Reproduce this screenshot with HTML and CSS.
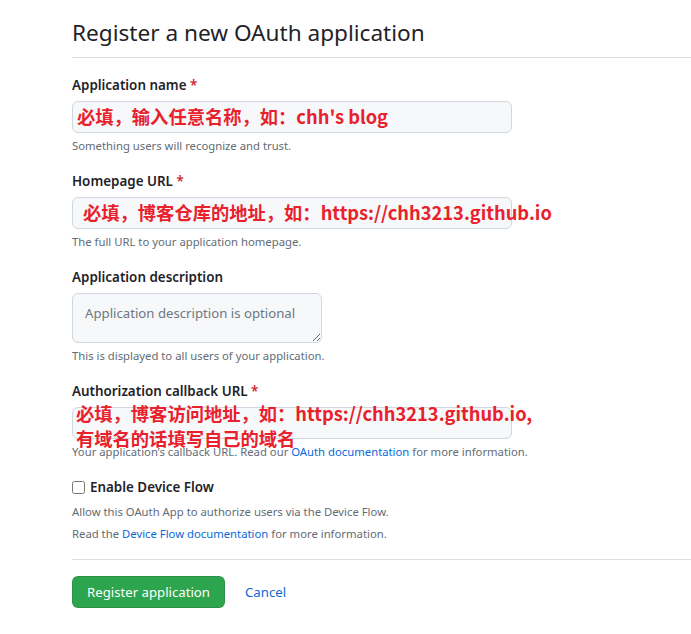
FILE: index.html
```html
<!DOCTYPE html>
<html lang="en">
<head>
<meta charset="utf-8">
<title>Register a new OAuth application</title>
<link rel="stylesheet" href="styles.css">
</head>
<body>
<div class="page">
  <div class="subhead">
    <h2 class="subhead-title">Register a new OAuth application</h2>
  </div>
  <form class="form">
    <div class="group">
      <label class="label">Application name <span class="req">*</span></label>
      <div class="field">
        <input class="input" type="text">
        <div class="anno anno-1">必填，输入任意名称，如：chh's blog</div>
      </div>
      <p class="note">Something users will recognize and trust.</p>
    </div>
    <div class="group">
      <label class="label">Homepage URL <span class="req">*</span></label>
      <div class="field">
        <input class="input" type="text">
        <div class="anno anno-2">必填，博客仓库的地址，如：https://chh3213.github.io</div>
      </div>
      <p class="note">The full URL to your application homepage.</p>
    </div>
    <div class="group">
      <label class="label">Application description</label>
      <div class="field">
        <textarea class="textarea" placeholder="Application description is optional"></textarea>
      </div>
      <p class="note">This is displayed to all users of your application.</p>
    </div>
    <div class="group">
      <label class="label">Authorization callback URL <span class="req">*</span></label>
      <div class="field">
        <input class="input" type="text">
        <div class="anno anno-3">必填，博客访问地址，如：https://chh3213.github.io,<br>有域名的话填写自己的域名</div>
      </div>
      <p class="note">Your application’s callback URL. Read our <a class="link" href="#">OAuth documentation</a> for more information.</p>
    </div>
    <div class="group group-check">
      <label class="check-label"><input class="check" type="checkbox"> Enable Device Flow</label>
      <p class="note note-check">Allow this OAuth App to authorize users via the Device Flow.</p>
      <p class="note note-check2">Read the <a class="link" href="#">Device Flow documentation</a> for more information.</p>
    </div>
    <div class="actions">
      <button class="btn-primary" type="button">Register application</button>
      <a class="cancel" href="#">Cancel</a>
    </div>
  </form>
</div>
</body>
</html>
```

FILE: styles.css
```css
* { box-sizing: border-box; }
html, body { margin: 0; padding: 0; background: #ffffff; }
body {
  font-family: "Noto Sans", "Open Sans", "Liberation Sans", "Noto Sans CJK SC", sans-serif;
  color: #1f2328;
  font-size: 13.2px;
  overflow: hidden;
}
.page {
  margin-left: 72px;
}
.subhead {
  padding-top: 15px;
  padding-bottom: 6px;
  border-bottom: 1px solid #d8dee4;
}
.subhead-title {
  margin: 0;
  font-size: 22.6px;
  line-height: 36px;
  font-weight: 400;
  color: #1f2328;
}
.form {
  padding-top: 17px;
}
.group {
  margin-bottom: 16px;
}
.label {
  display: block;
  font-size: 13.4px;
  line-height: 20px;
  font-weight: 600;
  margin-bottom: 6px;
}
.req { color: #d1242f; }
.field {
  position: relative;
}
.input {
  display: block;
  width: 440px;
  height: 32px;
  padding: 5px 12px;
  font-size: 14px;
  background: #f6f8fa;
  border: 1px solid #d0d7de;
  border-radius: 6px;
  outline: none;
}
.textarea {
  display: block;
  width: 250px;
  height: 50px;
  padding: 9px 12px;
  font-family: inherit;
  font-size: 13.2px;
  line-height: 20px;
  background: #f6f8fa;
  border: 1px solid #d0d7de;
  border-radius: 6px;
  resize: both;
  outline: none;
}
.textarea::placeholder { color: #6e7781; }
.note {
  margin: 4px 0 0;
  font-size: 11.3px;
  line-height: 18px;
  color: #636c76;
}
.link { color: #0969da; text-decoration: none; }
.anno {
  position: absolute;
  font-family: "Noto Sans CJK SC", "Noto Sans", sans-serif;
  font-weight: 700;
  font-size: 18.3px;
  line-height: 25px;
  color: #e8212c;
  white-space: nowrap;
}
.anno-1 { left: 5px; top: 3px; }
.anno-2 { left: 11px; top: 3px; }
.anno-3 { left: 4px; top: -6px; }
.check-label {
  display: flex;
  align-items: center;
  gap: 5px;
  font-size: 13.4px;
  line-height: 20px;
  font-weight: 600;
}
.check {
  margin: 0;
  width: 13px;
  height: 13px;
}
.note-check { margin-top: 6px; }
.note-check2 { margin-top: 4px; }
.actions {
  border-top: 1px solid #d8dee4;
  padding-top: 16px;
  display: flex;
  align-items: center;
  gap: 20px;
}
.btn-primary {
  height: 32px;
  padding: 0 14px;
  white-space: nowrap;
  font-family: inherit;
  font-size: 13.2px;
  color: #ffffff;
  background: #2da44e;
  border: 1px solid rgba(31, 35, 40, 0.15);
  border-radius: 6px;
}
.cancel {
  color: #0969da;
  text-decoration: none;
  font-size: 13.2px;
}
```
